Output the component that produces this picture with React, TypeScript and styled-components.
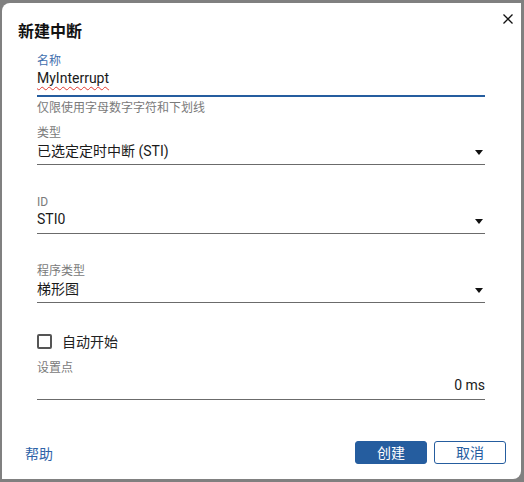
import React, { useState } from "react";
import styled, { createGlobalStyle } from "styled-components";

const GlobalStyle = createGlobalStyle`
  html, body {
    margin: 0;
    padding: 0;
    background: #808080;
  }
  body {
    font-family: Roboto, "Noto Sans CJK SC", sans-serif;
  }
`;

const Frame = styled.div`
  width: 524px;
  height: 482px;
  box-sizing: border-box;
  padding: 3px 3px 3px 2px;
`;

const Dialog = styled.div`
  height: 100%;
  background: #ffffff;
  border-radius: 8px 0 8px 0;
  display: flex;
  flex-direction: column;
`;

const Header = styled.div`
  display: flex;
  justify-content: space-between;
  align-items: flex-start;
  padding: 0 5px 0 16px;
`;

const Title = styled.h2`
  margin: 0;
  padding-top: 18px;
  font-size: 16px;
  line-height: 22px;
  font-weight: 700;
  color: #111;
`;

const CloseButton = styled.button`
  margin-top: 8px;
  width: 16px;
  height: 16px;
  padding: 0;
  border: none;
  background: none;
  display: flex;
  align-items: center;
  justify-content: center;
  cursor: pointer;
`;

const Body = styled.div`
  padding: 11px 36px 0 35px;
  display: flex;
  flex-direction: column;
`;

const Field = styled.div<{ $gap?: number; $focused?: boolean; $pad?: number }>`
  margin-top: ${({ $gap }) => $gap ?? 0}px;
  padding-bottom: ${({ $pad }) => $pad ?? 4}px;
  border-bottom: ${({ $focused }) => ($focused ? "2px solid #255d9f" : "1px solid #6b6b6b")};
`;

const Label = styled.div<{ $focused?: boolean }>`
  font-size: 12px;
  line-height: 14px;
  color: ${({ $focused }) => ($focused ? "#3f6fae" : "#7a7a7a")};
`;

const ValueRow = styled.div<{ $right?: boolean }>`
  display: flex;
  align-items: center;
  justify-content: ${({ $right }) => ($right ? "flex-end" : "space-between")};
  height: 20px;
  font-size: 14px;
  color: #1a1a1a;
`;

const Misspelled = styled.span`
  text-decoration: underline wavy #e0392f;
  text-decoration-thickness: 1px;
  text-underline-offset: 3px;
`;

const Caret = styled.span`
  width: 0;
  height: 0;
  margin: 4px 2px 0 0;
  border-left: 4px solid transparent;
  border-right: 4px solid transparent;
  border-top: 5px solid #111;
`;

const Helper = styled.div`
  margin-top: 4px;
  font-size: 12px;
  line-height: 14px;
  color: #7a7a7a;
`;

const CheckRow = styled.label`
  margin-top: 28px;
  display: flex;
  align-items: center;
  gap: 10px;
  height: 20px;
  font-size: 14px;
  color: #222;
  cursor: pointer;
`;

const Box = styled.span<{ $checked: boolean }>`
  width: 15px;
  height: 15px;
  box-sizing: border-box;
  border: 2px solid #555;
  border-radius: 2px;
  background: ${({ $checked }) => ($checked ? "#255d9f" : "#fff")};
`;

const Footer = styled.div`
  margin-top: auto;
  display: flex;
  align-items: center;
  justify-content: space-between;
  padding: 0 15px 15px 23px;
`;

const HelpLink = styled.a`
  font-size: 14px;
  line-height: 20px;
  color: #2f63a8;
  text-decoration: none;
  margin-top: 4px;
  cursor: pointer;
`;

const Actions = styled.div`
  display: flex;
  gap: 7px;
`;

const Button = styled.button<{ $primary?: boolean }>`
  width: 72px;
  height: 23px;
  box-sizing: border-box;
  border-radius: 3px;
  border: 1px solid #255d9f;
  background: ${({ $primary }) => ($primary ? "#255d9f" : "#fff")};
  color: ${({ $primary }) => ($primary ? "#fff" : "#255d9f")};
  font-family: Roboto, "Noto Sans CJK SC", sans-serif;
  font-size: 14px;
  padding: 0;
  cursor: pointer;
`;

const App: React.FC = () => {
  const [autoStart, setAutoStart] = useState(false);

  return (
    <>
      <GlobalStyle />
      <Frame>
        <Dialog>
          <Header>
            <Title>新建中断</Title>
            <CloseButton aria-label="close">
              <svg width="10" height="10" viewBox="0 0 10 10">
                <path d="M0.5 0.5 L9.5 9.5 M9.5 0.5 L0.5 9.5" stroke="#111" strokeWidth="1.3" />
              </svg>
            </CloseButton>
          </Header>
          <Body>
            <Field $focused $pad={7}>
              <Label $focused>名称</Label>
              <ValueRow>
                <Misspelled>MyInterrupt</Misspelled>
              </ValueRow>
            </Field>
            <Helper>仅限使用字母数字字符和下划线</Helper>

            <Field $gap={11}>
              <Label>类型</Label>
              <ValueRow>
                已选定定时中断 (STI)
                <Caret />
              </ValueRow>
            </Field>

            <Field $gap={30}>
              <Label>ID</Label>
              <ValueRow>
                STI0
                <Caret />
              </ValueRow>
            </Field>

            <Field $gap={30}>
              <Label>程序类型</Label>
              <ValueRow>
                梯形图
                <Caret />
              </ValueRow>
            </Field>

            <CheckRow onClick={() => setAutoStart(!autoStart)}>
              <Box $checked={autoStart} />
              自动开始
            </CheckRow>

            <Field $gap={10}>
              <Label>设置点</Label>
              <ValueRow $right>0 ms</ValueRow>
            </Field>
          </Body>
          <Footer>
            <HelpLink>帮助</HelpLink>
            <Actions>
              <Button $primary>创建</Button>
              <Button>取消</Button>
            </Actions>
          </Footer>
        </Dialog>
      </Frame>
    </>
  );
};

export default App;
